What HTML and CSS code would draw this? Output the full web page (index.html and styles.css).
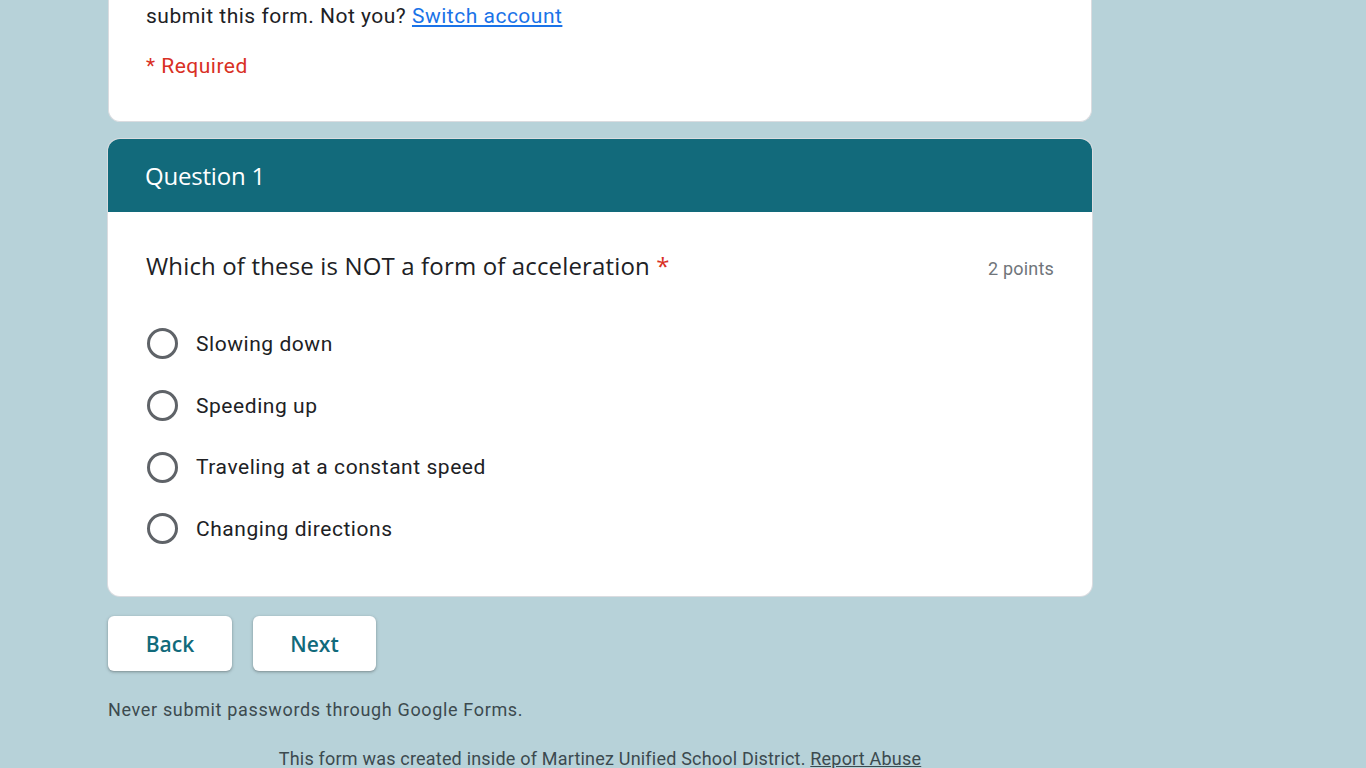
FILE: index.html
```html
<!DOCTYPE html>
<html>
<head>
<meta charset="utf-8">
<link rel="stylesheet" href="styles.css">
</head>
<body>
<div class="page">
  <div class="card intro">
    <p class="signin">submit this form. Not you? <a href="#" class="link">Switch account</a></p>
    <p class="required">* Required</p>
  </div>
  <div class="card question-card">
    <div class="section-head">Question 1</div>
    <div class="q-body">
      <div class="q-title-row">
        <div class="q-title">Which of these is NOT a form of acceleration <span class="star">*</span></div>
        <div class="points">2 points</div>
      </div>
      <div class="options">
        <label class="option"><span class="radio"></span><span class="opt-text">Slowing down</span></label>
        <label class="option"><span class="radio"></span><span class="opt-text">Speeding up</span></label>
        <label class="option"><span class="radio"></span><span class="opt-text">Traveling at a constant speed</span></label>
        <label class="option"><span class="radio"></span><span class="opt-text">Changing directions</span></label>
      </div>
    </div>
  </div>
  <div class="actions">
    <button class="btn">Back</button>
    <button class="btn btn-next">Next</button>
  </div>
  <p class="warning">Never submit passwords through Google Forms.</p>
  <p class="footer">This form was created inside of Martinez Unified School District. <a href="#" class="abuse">Report Abuse</a></p>
</div>
</body>
</html>
```

FILE: styles.css
```css
html, body {
  margin: 0;
  padding: 0;
  background: #b7d2d9;
  height: 100%;
  overflow: hidden;
}
body {
  font-family: Roboto, "Liberation Sans", sans-serif;
  color: #202124;
}
.page {
  width: 984px;
  margin-left: 108px;
}
.card {
  background: #fff;
  border: 1px solid #dadce0;
  border-radius: 12px;
  box-sizing: border-box;
}
.intro {
  border-top: none;
  border-top-left-radius: 0;
  border-top-right-radius: 0;
  padding: 0 37px 28px;
  height: 122px;
}
.signin {
  margin: 0;
  font-size: 21px;
  line-height: 32px;
  letter-spacing: 0.5px;
}
.link {
  color: #1a73e8;
  text-decoration: underline;
}
.required {
  margin: 18px 0 0;
  font-size: 21px;
  line-height: 32px;
  letter-spacing: 0.5px;
  color: #d93025;
}
.question-card {
  margin-top: 17px;
  overflow: hidden;
  border: none;
  box-shadow: 0 0 0 1px #dadce0;
  height: 457px;
}
.section-head {
  background: #126a7b;
  color: #fff;
  height: 73px;
  display: flex;
  align-items: center;
  padding: 0 37px;
  font-family: "Open Sans", Roboto, sans-serif;
  font-size: 24px;
  letter-spacing: -0.2px;
}
.q-body {
  padding: 36px 38px 0;
}
.q-title-row {
  display: flex;
  justify-content: space-between;
  align-items: center;
}
.q-title {
  font-family: "Open Sans", Roboto, sans-serif;
  font-size: 24px;
  line-height: 36px;
  letter-spacing: 0.15px;
}
.star {
  color: #d93025;
}
.points {
  font-size: 18px;
  color: #70757a;
  padding-top: 4px;
  letter-spacing: 0.2px;
}
.options {
  margin-top: 29px;
  display: flex;
  flex-direction: column;
}
.option {
  display: flex;
  align-items: center;
  height: 61.7px;
}
.radio {
  width: 25px;
  height: 25px;
  border: 3px solid #5f6368;
  border-radius: 50%;
  margin-left: 1px;
  flex: none;
}
.opt-text {
  margin-left: 18px;
  font-size: 21px;
  letter-spacing: 0.55px;
}
.actions {
  margin-top: 20px;
  display: flex;
  gap: 21px;
}
.btn {
  height: 55px;
  width: 124px;
  padding: 0;
  background: #fff;
  border: none;
  border-radius: 6px;
  box-shadow: 0 1px 2px rgba(60,64,67,0.3), 0 1px 3px 1px rgba(60,64,67,0.15);
  color: #116a7b;
  font-family: "Open Sans", Roboto, sans-serif;
  font-weight: 600;
  font-size: 21px;
}
.btn-next {
  width: 123px;
}
.warning {
  margin: 28px 0 0;
  font-size: 18px;
  line-height: 22px;
  color: #3c4a4f;
  letter-spacing: 0.65px;
}
.footer {
  margin: 27px 0 0;
  text-align: center;
  font-size: 18px;
  line-height: 22px;
  color: #3c4a4f;
  letter-spacing: 0.2px;
}
.abuse {
  color: #3c4a4f;
  text-decoration: underline;
}
```
